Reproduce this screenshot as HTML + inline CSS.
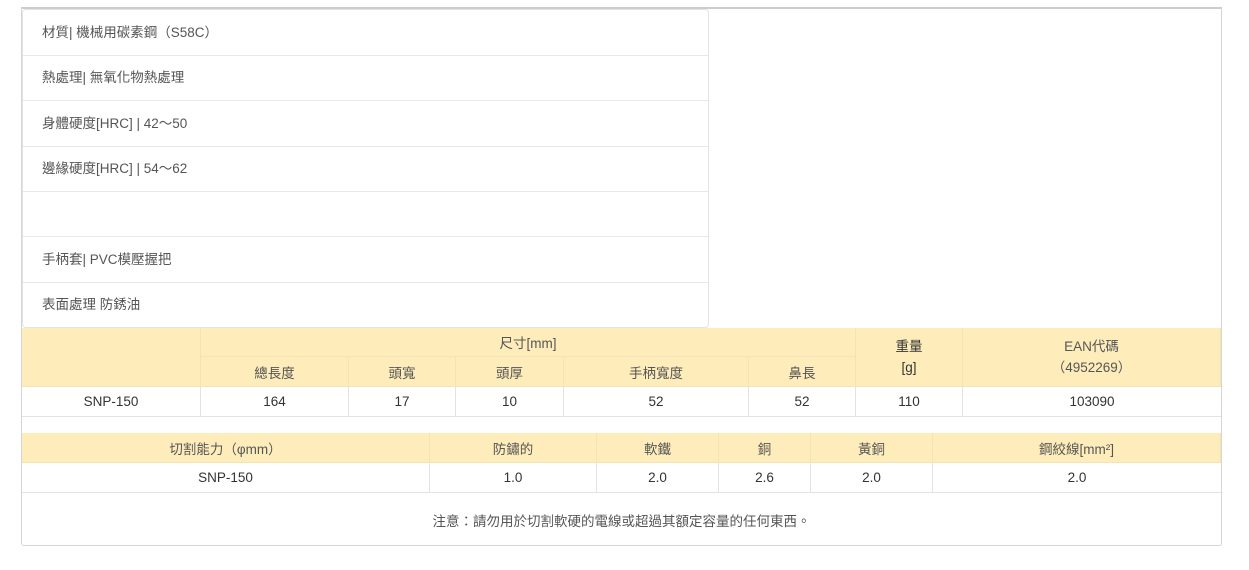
<!DOCTYPE html><html><head><meta charset="utf-8"><style>
*{margin:0;padding:0;box-sizing:border-box}
body{width:1249px;height:570px;background:#fff;font-family:"Liberation Sans","Noto Sans CJK TC",sans-serif;font-size:13.5px;color:#333;position:relative;overflow:hidden}
.a{position:absolute}
.outer{left:21px;top:7px;width:1201px;height:539px;border:1px solid #d5d5d5;border-top:2px solid #ccc;border-radius:0 0 3px 3px}
.list{left:22px;top:9px;width:687px;height:319px;border:1px solid #e3e3e3;border-radius:4px}
.li{position:absolute;left:0;width:685px;height:46px;border-bottom:1px solid #e8e8e8;padding-left:19px;line-height:46px;color:#555}
.c{position:absolute;display:flex;align-items:center;justify-content:center;text-align:center;border-right:1px solid #e3e3e3;border-bottom:1px solid #e3e3e3}
.h{background:#feedbb;color:#555;border-color:#f4e3b4}
</style></head><body>
<div class="a outer"></div>
<div class="a list">
<div class="li" style="top:0">材質| 機械用碳素鋼（S58C）</div>
<div class="li" style="top:45px">熱處理| 無氧化物熱處理</div>
<div class="li" style="top:91px">身體硬度[HRC] | 42～50</div>
<div class="li" style="top:136px">邊緣硬度[HRC] | 54～62</div>
<div class="li" style="top:181px"></div>
<div class="li" style="top:227px">手柄套| PVC模壓握把</div>
<div class="li" style="top:272px;height:45px;border-bottom:none">表面處理 防銹油</div>
</div>
<!-- table1 -->
<div class="c h" style="left:22px;top:328px;width:179px;height:59px"></div>
<div class="c h" style="left:201px;top:328px;width:655px;height:29px">尺寸[mm]</div>
<div class="c h" style="left:201px;top:357px;width:148px;height:30px">總長度</div>
<div class="c h" style="left:349px;top:357px;width:107px;height:30px">頭寬</div>
<div class="c h" style="left:456px;top:357px;width:108px;height:30px">頭厚</div>
<div class="c h" style="left:564px;top:357px;width:185px;height:30px">手柄寬度</div>
<div class="c h" style="left:749px;top:357px;width:107px;height:30px">鼻長</div>
<div class="c h" style="left:856px;top:328px;width:107px;height:59px;color:#333;line-height:21px">重量<br>[g]</div>
<div class="c h" style="left:963px;top:328px;width:258px;height:59px;line-height:21px">EAN代碼<br>（4952269）</div>
<div class="c" style="left:22px;top:387px;width:179px;height:30px">SNP-150</div>
<div class="c" style="left:201px;top:387px;width:148px;height:30px">164</div>
<div class="c" style="left:349px;top:387px;width:107px;height:30px">17</div>
<div class="c" style="left:456px;top:387px;width:108px;height:30px">10</div>
<div class="c" style="left:564px;top:387px;width:185px;height:30px">52</div>
<div class="c" style="left:749px;top:387px;width:107px;height:30px">52</div>
<div class="c" style="left:856px;top:387px;width:107px;height:30px">110</div>
<div class="c" style="left:963px;top:387px;width:258px;height:30px;border-right:none">103090</div>
<!-- table2 -->
<div class="c h" style="left:22px;top:433px;width:408px;height:30px">切割能力（φmm）</div>
<div class="c h" style="left:430px;top:433px;width:167px;height:30px">防鏽的</div>
<div class="c h" style="left:597px;top:433px;width:122px;height:30px">軟鐵</div>
<div class="c h" style="left:719px;top:433px;width:92px;height:30px">銅</div>
<div class="c h" style="left:811px;top:433px;width:122px;height:30px">黃銅</div>
<div class="c h" style="left:933px;top:433px;width:288px;height:30px">鋼絞線[mm²]</div>
<div class="c" style="left:22px;top:463px;width:408px;height:30px">SNP-150</div>
<div class="c" style="left:430px;top:463px;width:167px;height:30px">1.0</div>
<div class="c" style="left:597px;top:463px;width:122px;height:30px">2.0</div>
<div class="c" style="left:719px;top:463px;width:92px;height:30px">2.6</div>
<div class="c" style="left:811px;top:463px;width:122px;height:30px">2.0</div>
<div class="c" style="left:933px;top:463px;width:288px;height:30px;border-right:none">2.0</div>
<div class="a" style="left:22px;top:510px;width:1199px;text-align:center;color:#555">注意：請勿用於切割軟硬的電線或超過其額定容量的任何東西。</div>
</body></html>
